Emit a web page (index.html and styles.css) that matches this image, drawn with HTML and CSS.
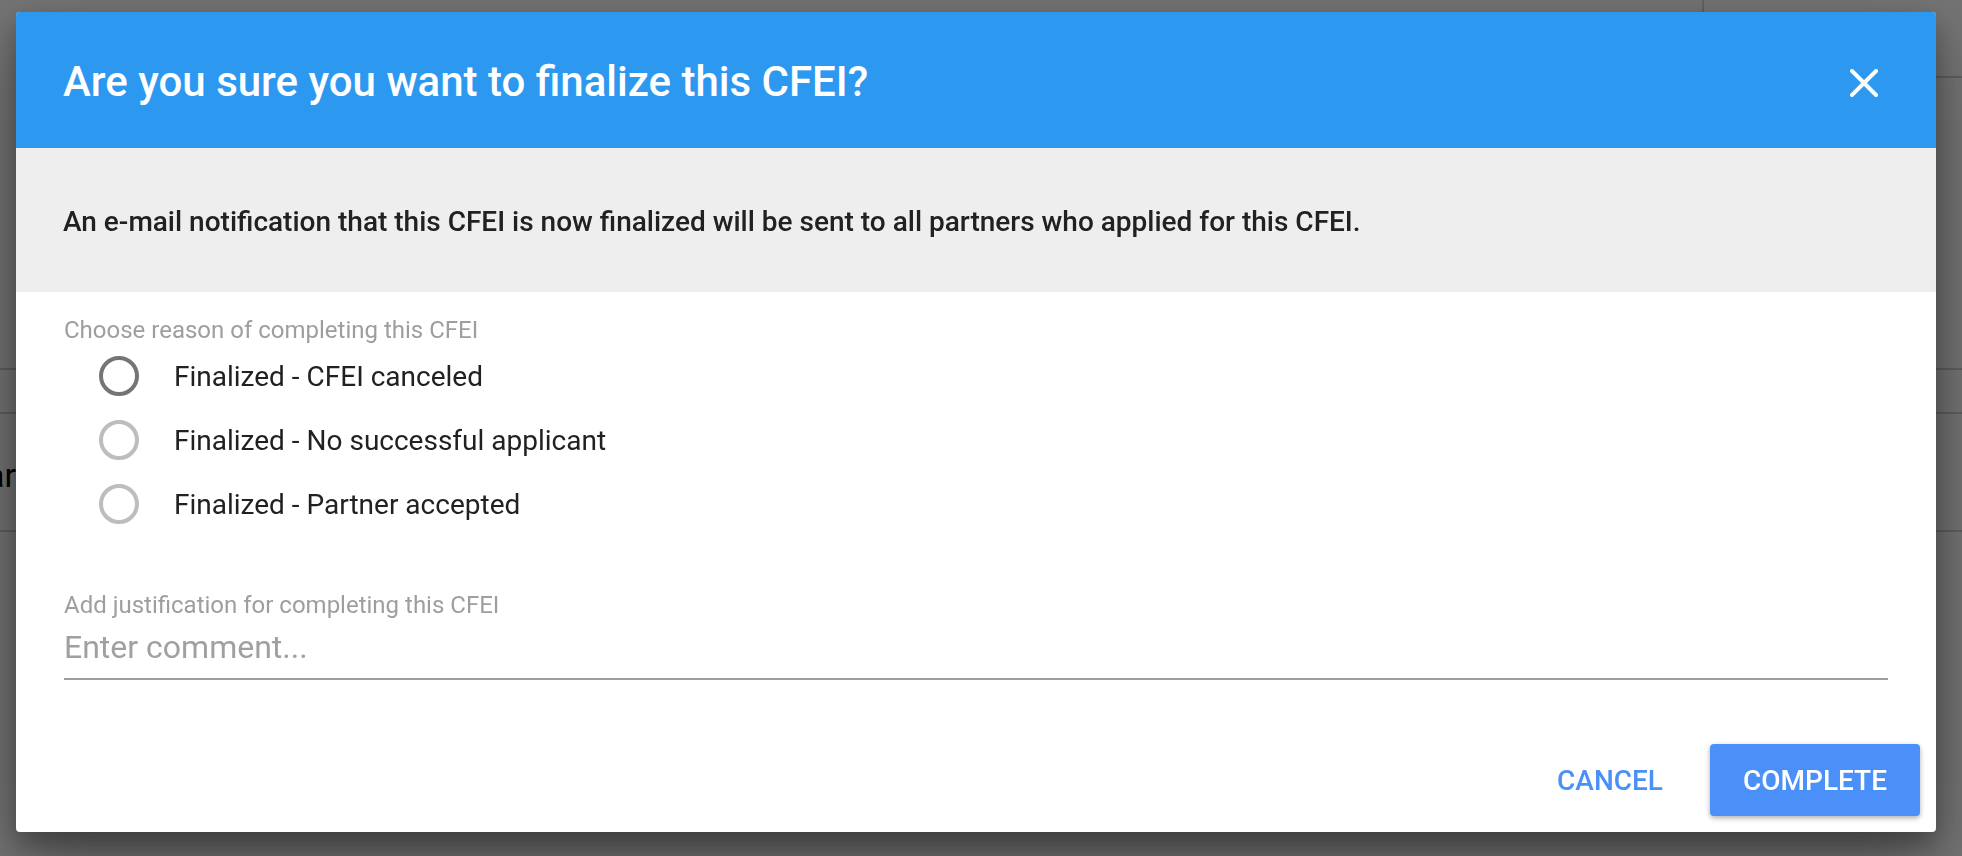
FILE: index.html
```html
<!DOCTYPE html>
<html lang="en">
<head>
<meta charset="utf-8">
<title>Finalize CFEI</title>
<link rel="stylesheet" href="styles.css">
</head>
<body>
<div class="page">
  <div class="page-top">
    <div class="page-top-fill"></div>
    <div class="page-top-card"></div>
  </div>
  <div class="page-row page-row-a"></div>
  <div class="page-row page-row-b"></div>
  <div class="page-row page-row-c"><div class="page-heading-clip"><span class="page-heading">Calendar</span></div></div>
</div>

<div class="backdrop">
  <div class="dialog">
    <div class="dlg-header">
      <h1 class="dlg-title">Are you sure you want to finalize this CFEI?</h1>
      <button class="close-btn" aria-label="Close">
        <svg width="28" height="28" viewBox="0 0 28 28"><path d="M2 2 L26 26 M26 2 L2 26" stroke="#fff" stroke-width="4" stroke-linecap="square"/></svg>
      </button>
    </div>
    <div class="dlg-notice">An e-mail notification that this CFEI is now finalized will be sent to all partners who applied for this CFEI.</div>
    <div class="dlg-body">
      <div class="field-label">Choose reason of completing this CFEI</div>
      <div class="radio-group">
        <label class="radio-row"><span class="radio-box"><span class="radio-ring radio-ring-focus"></span></span><span class="radio-text">Finalized - CFEI canceled</span></label>
        <label class="radio-row"><span class="radio-box"><span class="radio-ring"></span></span><span class="radio-text">Finalized - No successful applicant</span></label>
        <label class="radio-row"><span class="radio-box"><span class="radio-ring"></span></span><span class="radio-text">Finalized - Partner accepted</span></label>
      </div>
      <div class="text-field">
        <div class="field-label">Add justification for completing this CFEI</div>
        <div class="input-text">Enter comment...</div>
      </div>
    </div>
    <div class="dlg-actions">
      <button class="btn-flat">CANCEL</button>
      <button class="btn-raised">COMPLETE</button>
    </div>
  </div>
</div>
</body>
</html>
```

FILE: styles.css
```css
* { box-sizing: border-box; }
html, body { margin: 0; padding: 0; }
body {
  width: 1962px;
  height: 856px;
  overflow: hidden;
  background: #ffffff;
  font-family: Roboto, "Liberation Sans", Arial, sans-serif;
}

/* page behind the modal */
.page { width: 1962px; height: 856px; }
.page-top { display: flex; height: 78px; }
.page-top-fill { flex: 1; border-right: 2px solid #d8d8d8; }
.page-top-card { width: 258px; border-bottom: 2px solid #d0d0d0; background: #fff; }
.page-row { border-bottom: 2px solid #d0d0d0; }
.page-row-a { height: 292px; }
.page-row-b { height: 44px; }
.page-row-c { height: 118px; display: flex; align-items: center; padding-top: 6px; }
.page-heading-clip {
  width: 16px;
  overflow: hidden;
  display: flex;
  justify-content: flex-end;
}
.page-heading {
  flex: none;
  font-size: 34px;
  color: #000;
  white-space: nowrap;
}

/* overlay */
.backdrop {
  position: fixed;
  inset: 0;
  background: rgba(0, 0, 0, 0.55);
  padding: 12px 0 0 16px;
}
.dialog {
  width: 1920px;
  height: 820px;
  background: #ffffff;
  border-radius: 4px;
  overflow: hidden;
  display: flex;
  flex-direction: column;
  box-shadow: 0 30px 70px rgba(0, 0, 0, 0.35), 0 12px 24px rgba(0, 0, 0, 0.25);
}

.dlg-header {
  height: 136px;
  flex: none;
  background: #2d98f0;
  display: flex;
  align-items: center;
  justify-content: space-between;
  padding: 0 24px 0 47px;
}
.dlg-title {
  margin: 0;
  color: #ffffff;
  font-size: 42px;
  font-weight: 500;
  line-height: 1;
  padding-top: 4px;
}
.close-btn {
  width: 96px;
  height: 96px;
  border: 0;
  background: transparent;
  display: flex;
  align-items: center;
  justify-content: center;
  padding: 0;
  margin-top: 6px;
}

.dlg-notice {
  height: 144px;
  flex: none;
  background: #eeeeee;
  display: flex;
  align-items: center;
  padding: 0 47px;
  padding-top: 2px;
  font-size: 28px;
  font-weight: 500;
  color: #212121;
}

.dlg-body {
  flex: 1;
  padding: 24px 48px 0 48px;
}
.field-label {
  font-size: 24px;
  color: #9e9e9e;
  line-height: 28px;
}
.radio-group {
  display: flex;
  flex-direction: column;
  padding: 0 0 0 31px;
}
.radio-row {
  height: 64px;
  display: flex;
  align-items: center;
}
.radio-box {
  width: 48px;
  height: 48px;
  display: flex;
  align-items: center;
  justify-content: center;
}
.radio-ring {
  width: 40px;
  height: 40px;
  border-radius: 50%;
  border: 4px solid #bdbdbd;
}
.radio-ring-focus { border-color: #757575; }
.radio-text {
  margin-left: 31px;
  font-size: 28px;
  color: #212121;
}

.text-field {
  margin-top: 54px;
  border-bottom: 2px solid #9e9e9e;
  width: 1824px;
}
.text-field .field-label { line-height: 30px; }
.input-text {
  font-size: 32px;
  color: #a0a0a0;
  height: 58px;
  line-height: 54px;
}

.dlg-actions {
  flex: none;
  height: 88px;
  display: flex;
  align-items: flex-start;
  justify-content: flex-end;
  padding: 0 16px 0 0;
  gap: 23px;
}
.btn-flat, .btn-raised {
  font-family: Roboto, "Liberation Sans", Arial, sans-serif;
  font-size: 28px;
  font-weight: 500;
  border: 0;
  height: 72px;
  border-radius: 4px;
  cursor: pointer;
}
.btn-flat {
  background: transparent;
  color: #4a90f8;
  padding: 0 24px;
}
.btn-raised {
  background: #4a90f8;
  color: #ffffff;
  width: 210px;
  box-shadow: 0 2px 6px rgba(0, 0, 0, 0.2), 0 2px 4px rgba(0, 0, 0, 0.15);
}
```
